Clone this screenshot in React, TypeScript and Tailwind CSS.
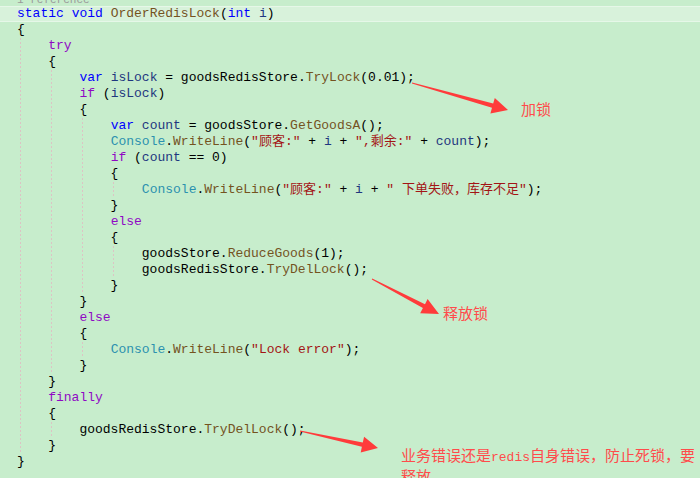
import React from "react";

type Tok = [string, string?];

const K = "text-[#0000ff]";
const C = "text-[#8f08c4]";
const M = "text-[#74531f]";
const T = "text-[#2b91af]";
const S = "text-[#a31515]";
const V = "text-[#1f377f]";

const lines: Tok[][] = [
  [["static", K], [" "], ["void", K], [" "], ["OrderRedisLock", M], ["("], ["int", K], [" "], ["i", V], [")"]],
  [["{"]],
  [["    "], ["try", C]],
  [["    {"]],
  [["        "], ["var", K], [" "], ["isLock", V], [" = goodsRedisStore."], ["TryLock", M], ["(0.01);"]],
  [["        "], ["if", C], [" ("], ["isLock", V], [")"]],
  [["        {"]],
  [["            "], ["var", K], [" "], ["count", V], [" = goodsStore."], ["GetGoodsA", M], ["();"]],
  [["            "], ["Console", T], ["."], ["WriteLine", M], ["("], ["\"顾客:\"", S], [" + "], ["i", V], [" + "], ["\",剩余:\"", S], [" + "], ["count", V], [");"]],
  [["            "], ["if", C], [" ("], ["count", V], [" == 0)"]],
  [["            {"]],
  [["                "], ["Console", T], ["."], ["WriteLine", M], ["("], ["\"顾客:\"", S], [" + "], ["i", V], [" + "], ["\" 下单失败，库存不足\"", S], [");"]],
  [["            }"]],
  [["            "], ["else", C]],
  [["            {"]],
  [["                goodsStore."], ["ReduceGoods", M], ["(1);"]],
  [["                goodsRedisStore."], ["TryDelLock", M], ["();"]],
  [["            }"]],
  [["        }"]],
  [["        "], ["else", C]],
  [["        {"]],
  [["            "], ["Console", T], ["."], ["WriteLine", M], ["("], ["\"Lock error\"", S], [");"]],
  [["        }"]],
  [["    }"]],
  [["    "], ["finally", C]],
  [["    {"]],
  [["        goodsRedisStore."], ["TryDelLock", M], ["();"]],
  [["    }"]],
  [["}"]],
];

const guides: [number, number, number][] = [
  [20.5, 38, 454],
  [51.5, 70, 374],
  [51.5, 422, 438],
  [82.5, 118, 294],
  [82.5, 342, 358],
  [113.5, 182, 198],
  [113.5, 246, 278],
];

function arrowPoints(tx: number, ty: number, px: number, py: number, headLen: number, headHalf: number, shaft: number) {
  const dx = px - tx;
  const dy = py - ty;
  const len = Math.hypot(dx, dy);
  const ux = dx / len;
  const uy = dy / len;
  const nx = -uy;
  const ny = ux;
  const bx = px - ux * headLen;
  const by = py - uy * headLen;
  const pts = [
    [tx + nx * 0.5, ty + ny * 0.5],
    [bx + nx * shaft, by + ny * shaft],
    [bx + nx * headHalf, by + ny * headHalf],
    [px, py],
    [bx - nx * headHalf, by - ny * headHalf],
    [bx - nx * shaft, by - ny * shaft],
    [tx - nx * 0.5, ty - ny * 0.5],
  ];
  return pts.map((p) => p[0].toFixed(1) + "," + p[1].toFixed(1)).join(" ");
}

const monoStack = "'Liberation Mono', 'Noto Sans CJK SC', monospace";
const cjkStack = "'Noto Sans CJK SC', 'Liberation Sans', sans-serif";

export default function App() {
  return (
    <div className="relative w-[700px] h-[478px] overflow-hidden bg-[#c7edcc]">
      <div className="flex flex-col" style={{ fontFamily: monoStack }}>
        <div className="-mt-[7px] h-[13px] pl-[17px] flex items-end">
          <span className="text-[11px] leading-[11px] text-[#9a9a9a] whitespace-pre">1 reference</span>
        </div>
        {lines.map((toks, i) => (
          <div
            key={i}
            className={
              i === 0
                ? "h-[16px] pl-[17px] text-[13px] whitespace-pre text-black bg-[#d8f2db] border-y border-[#e6f7e8] box-border leading-[14px]"
                : "h-[16px] pl-[17px] text-[13px] leading-[16px] whitespace-pre text-black"
            }
          >
            {toks.map((t, j) => (
              <span key={j} className={t[1] ?? ""}>
                {t[0]}
              </span>
            ))}
          </div>
        ))}
      </div>

      <svg className="absolute left-0 top-0 pointer-events-none" width="700" height="478" viewBox="0 0 700 478">
        {guides.map((g, i) => (
          <line key={i} x1={g[0]} y1={g[1]} x2={g[0]} y2={g[2]} stroke="#dcc4c4" strokeWidth="1" strokeDasharray="2,2" />
        ))}
        <polygon points={arrowPoints(412, 83, 508, 110, 16, 8, 2.2)} fill="#ff3b3b" />
        <polygon points={arrowPoints(372, 279, 439, 314, 17, 8, 2.2)} fill="#ff3b3b" />
        <polygon points={arrowPoints(300, 431, 378, 448, 16, 8, 2.2)} fill="#ff3b3b" />
      </svg>

      <div className="absolute left-[521px] top-[101px] text-[15px] leading-[16px] text-[#ff4b4b] whitespace-pre" style={{ fontFamily: cjkStack }}>
        加锁
      </div>
      <div className="absolute left-[443px] top-[305px] text-[15px] leading-[16px] text-[#ff4b4b] whitespace-pre" style={{ fontFamily: cjkStack }}>
        释放锁
      </div>
      <div className="absolute left-[401px] top-[446px] text-[15px] leading-[18px] text-[#ff4b4b] whitespace-pre" style={{ fontFamily: cjkStack }}>
        <div>
          业务错误还是<span className="text-[13px]" style={{ fontFamily: monoStack }}>redis</span>自身错误，防止死锁，要
        </div>
        <div>释放</div>
      </div>
    </div>
  );
}
